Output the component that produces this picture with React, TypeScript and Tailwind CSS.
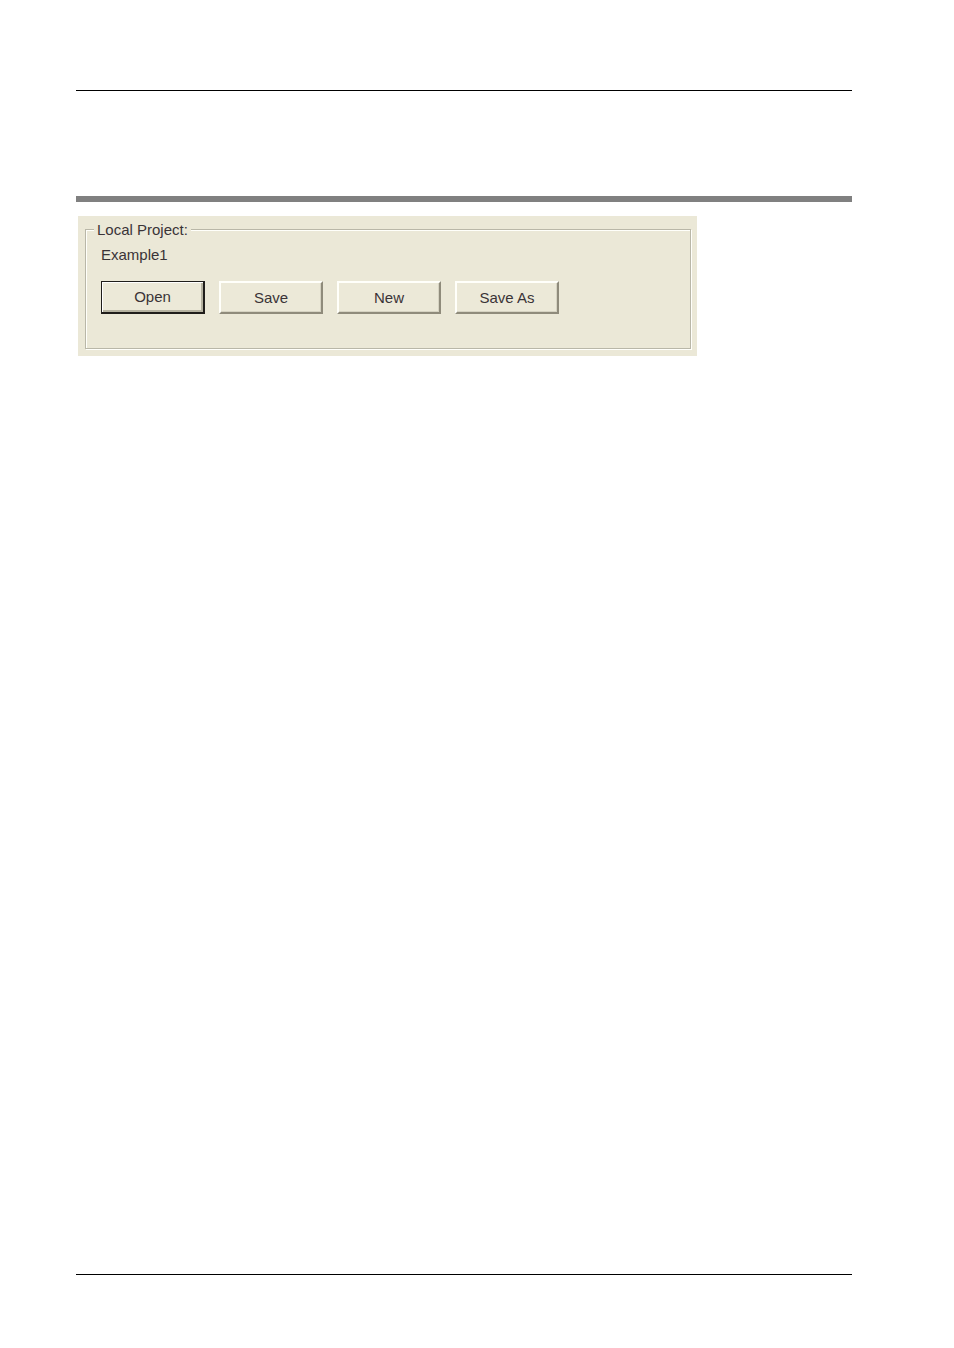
import clsx from "clsx";

interface ProjectAction {
  label: string;
  isDefault?: boolean;
}

const actions: ProjectAction[] = [
  { label: "Open", isDefault: true },
  { label: "Save" },
  { label: "New" },
  { label: "Save As" },
];

function ActionButton({ label, isDefault }: ProjectAction) {
  return (
    <button
      type="button"
      className={clsx(
        "h-[33px] w-[104px] bg-[#ece9d8] text-center text-[#3a3437]",
        isDefault
          ? "border border-r-2 border-b-2 border-[#1f1d1a] shadow-[inset_1px_1px_0_#ffffff,inset_-2px_-2px_0_#b5b2a0]"
          : "border-2 border-t-[#fffffa] border-r-[#8f8b7b] border-b-[#8f8b7b] border-l-[#fffffa] shadow-[inset_-1px_-1px_0_#d6d3c2]"
      )}
    >
      {label}
    </button>
  );
}

function LocalProjectPanel() {
  return (
    <section className="ml-0.5 w-full max-w-[619px] bg-[#ebe8d7] px-[7px] pt-1 pb-[7px] text-[15px] leading-5 text-[#3a3437]">
      <fieldset className="-mr-px border border-[#b9b7a8] pr-4 pb-[34px] pl-[15px] shadow-[1px_1px_0_#fffffa,inset_1px_1px_0_#fffffa]">
        <legend className="-ml-[7px] bg-[#ebe8d7] px-[3px] leading-[19px]">
          Local Project:
        </legend>
        <p className="mt-1.5">Example1</p>
        <div className="mt-4 flex flex-wrap gap-3.5">
          {actions.map((action) => (
            <ActionButton key={action.label} {...action} />
          ))}
        </div>
      </fieldset>
    </section>
  );
}

export default function App() {
  return (
    <div className="flex min-h-screen flex-col bg-white pt-[90px] pr-[102px] pb-[73px] pl-[76px] font-['Liberation_Sans',Arial,sans-serif]">
      <header className="border-t border-black pt-[105px]">
        <div className="h-1.5 bg-[#808080]" />
      </header>
      <main className="grow pt-3.5">
        <LocalProjectPanel />
      </main>
      <footer className="border-t border-black" />
    </div>
  );
}
